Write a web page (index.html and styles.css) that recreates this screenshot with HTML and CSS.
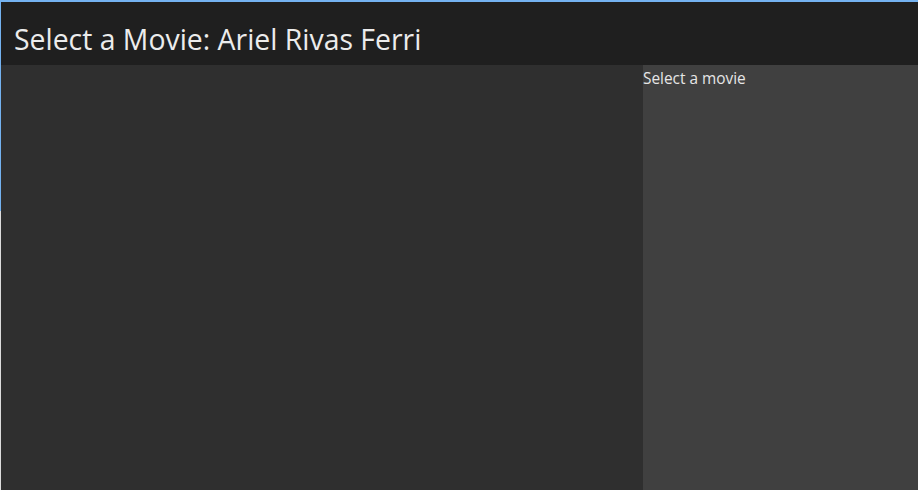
FILE: index.html
```html
<!DOCTYPE html>
<html>
<head>
<meta charset="utf-8">
<link rel="stylesheet" href="styles.css">
</head>
<body>
<div class="window">
  <header class="titlebar">
    <h1 class="title">Select a Movie: Ariel Rivas Ferri</h1>
  </header>
  <main class="content">
    <section class="list-pane"></section>
    <aside class="detail-pane">
      <p class="placeholder">Select a movie</p>
    </aside>
  </main>
</div>
</body>
</html>
```

FILE: styles.css
```css
html, body {
  margin: 0;
  padding: 0;
  height: 100%;
}
body {
  background: linear-gradient(to bottom, #74b2f0 0, #74b2f0 211px, #dcdcdc 211px);
  overflow: hidden;
}
.window {
  margin: 2px 0 0 1px;
  height: calc(100% - 2px);
  display: flex;
  flex-direction: column;
  font-family: "Open Sans", "Noto Sans", sans-serif;
}
.titlebar {
  background: #1f1f1f;
  height: 63px;
  box-sizing: border-box;
  padding: 19px 0 0 13px;
  flex: none;
}
.title {
  margin: 0;
  font-weight: 400;
  font-size: 28.4px;
  line-height: 36px;
  color: #ececec;
}
.content {
  flex: 1;
  display: flex;
}
.list-pane {
  width: 642px;
  background: #2f2f2f;
}
.detail-pane {
  flex: 1;
  background: #404040;
}
.placeholder {
  margin: 4px 0 0;
  font-size: 15.4px;
  line-height: 20px;
  color: #e6e6e6;
}
```
